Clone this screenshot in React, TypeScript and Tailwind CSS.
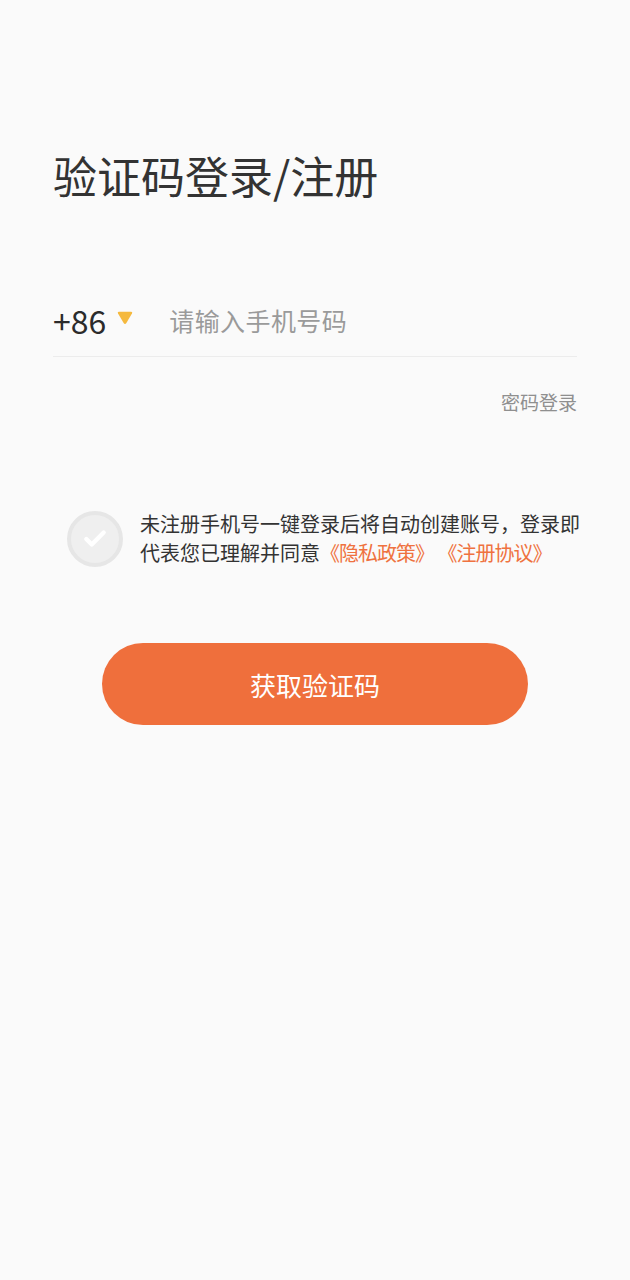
import { Check } from 'lucide-react'

const font = { fontFamily: '"Noto Sans CJK SC", "Noto Sans", sans-serif' }

export default function App() {
  return (
    <div className="min-h-[1280px] w-full bg-[#fafafa] text-[#333]" style={font}>
      <div className="px-[53px] pt-[145px]">
        <h1 className="text-[44px] leading-[60px] font-normal text-[#333]">验证码登录/注册</h1>

        <div className="mt-[93px] flex items-center border-b border-[#ececec] pb-[14px]">
          <span className="text-[32px] leading-[44px] text-[#2b2b2b]">+86</span>
          <svg width="18" height="16" viewBox="0 0 16 14" className="ml-[10px] mb-[4px]">
            <path d="M2.5 1.5 H13.5 Q15 1.5 14.2 3 L9.2 11.5 Q8 13.3 6.8 11.5 L1.8 3 Q1 1.5 2.5 1.5 Z" fill="#f5b93e" />
          </svg>
          <span className="ml-[35px] text-[25px] leading-[44px] tracking-[0.4px] text-[#9a9a9a]">请输入手机号码</span>
        </div>

        <div className="mt-[32px] flex justify-end">
          <span className="text-[19px] leading-[26px] text-[#8f8f8f]">密码登录</span>
        </div>

        <div className="mt-[94px] flex items-start pl-[14px]">
          <div className="mt-[2px] flex h-[56px] w-[56px] shrink-0 items-center justify-center rounded-full border-[4px] border-[#e6e6e6] bg-[#efefef]">
            <Check className="h-[26px] w-[26px] text-white" strokeWidth={4} />
          </div>
          <p className="ml-[17px] whitespace-nowrap text-[20px] leading-[29px] text-[#333]">
            未注册手机号一键登录后将自动创建账号，登录即
            <br />
            代表您已理解并同意<span className="text-[#ef7240] tracking-[-1px]">《隐私政策》 《注册协议》</span>
          </p>
        </div>

        <div className="mt-[76px] flex justify-center">
          <button className="flex h-[82px] w-[426px] items-center justify-center rounded-full bg-[#ef6f3c] text-[26px] text-white">
            获取验证码
          </button>
        </div>
      </div>
    </div>
  )
}
